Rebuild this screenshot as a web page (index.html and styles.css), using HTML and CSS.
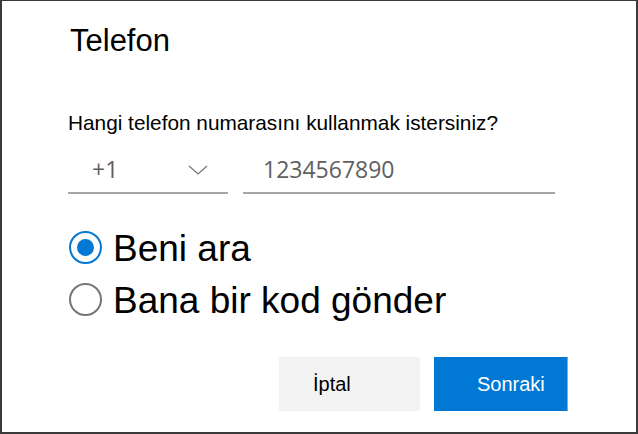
FILE: index.html
```html
<!DOCTYPE html>
<html lang="tr">
<head>
    <meta charset="UTF-8">
    <meta name="viewport" content="width=device-width, initial-scale=1.0">
    <title>Telefon</title>
    <link rel="stylesheet" href="styles.css">
</head>
<body>
    <div class="dialog">
        <h1 class="title">Telefon</h1>

        <p class="question">Hangi telefon numarasını kullanmak istersiniz?</p>

        <div class="phone-row">
            <div class="field country">
                <span class="value">+1</span>
                <svg class="chevron" width="20" height="10" viewBox="0 0 20 10">
                    <path d="M1 1 L10 9 L19 1" fill="none" stroke="#777" stroke-width="1.3"/>
                </svg>
            </div>
            <div class="field number">
                <span class="value">1234567890</span>
            </div>
        </div>

        <div class="options">
            <label class="option">
                <span class="radio checked"></span>
                <span>Beni ara</span>
            </label>
            <label class="option">
                <span class="radio"></span>
                <span>Bana bir kod gönder</span>
            </label>
        </div>

        <div class="actions">
            <button class="btn cancel">İptal</button>
            <button class="btn primary">Sonraki</button>
        </div>
    </div>
</body>
</html>
```

FILE: styles.css
```css
body {
    margin: 0;
    font-family: "Liberation Sans", Arial, sans-serif;
    color: #000;
    background: #fff;
}

.dialog {
    box-sizing: border-box;
    width: 638px;
    height: 434px;
    border: 2px solid #3a3a3a;
    border-top-width: 1px;
    padding: 0 68px 0 66px;
}

.title {
    margin: 22px 0 0 2px;
    font-size: 31px;
    font-weight: normal;
    line-height: 36px;
}

.question {
    margin: 52px 0 0 0;
    font-size: 20.8px;
    line-height: 24px;
}

.phone-row {
    display: flex;
    gap: 15px;
    margin-top: 13px;
}

.field {
    box-sizing: border-box;
    height: 46px;
    border-bottom: 2px solid #a6a6a6;
    display: flex;
    align-items: flex-start;
    padding-top: 5px;
    font-family: "Open Sans", "Noto Sans", sans-serif;
    font-size: 23px;
    line-height: 32px;
    color: #606060;
}

.country {
    width: 160px;
    padding-left: 24px;
    padding-right: 20px;
    justify-content: space-between;
}

.chevron {
    margin-top: 12px;
}

.number {
    width: 312px;
    padding-left: 20px;
}

.options {
    margin-top: 29px;
}

.option {
    display: flex;
    align-items: center;
    height: 52px;
    font-size: 37px;
    line-height: 52px;
}

.radio {
    box-sizing: border-box;
    width: 33px;
    height: 33px;
    margin-left: 1px;
    margin-right: 11px;
    margin-top: -4px;
    border: 2px solid #767676;
    border-radius: 50%;
    display: flex;
    align-items: center;
    justify-content: center;
}

.radio.checked {
    border-color: #0078d4;
}

.radio.checked::after {
    content: "";
    width: 17px;
    height: 17px;
    border-radius: 50%;
    background: #0078d4;
}

.actions {
    display: flex;
    justify-content: flex-end;
    gap: 14px;
    margin-top: 30px;
}

.btn {
    height: 54px;
    border: none;
    font-family: "Liberation Sans", Arial, sans-serif;
    font-size: 20px;
    text-align: left;
    cursor: pointer;
}

.cancel {
    width: 141px;
    padding-left: 34px;
    background: #f3f3f3;
    color: #000;
}

.primary {
    width: 134px;
    padding-left: 43px;
    background: #0078d4;
    color: #fff;
    border-right: 1px solid #6cb4ea;
}
```
